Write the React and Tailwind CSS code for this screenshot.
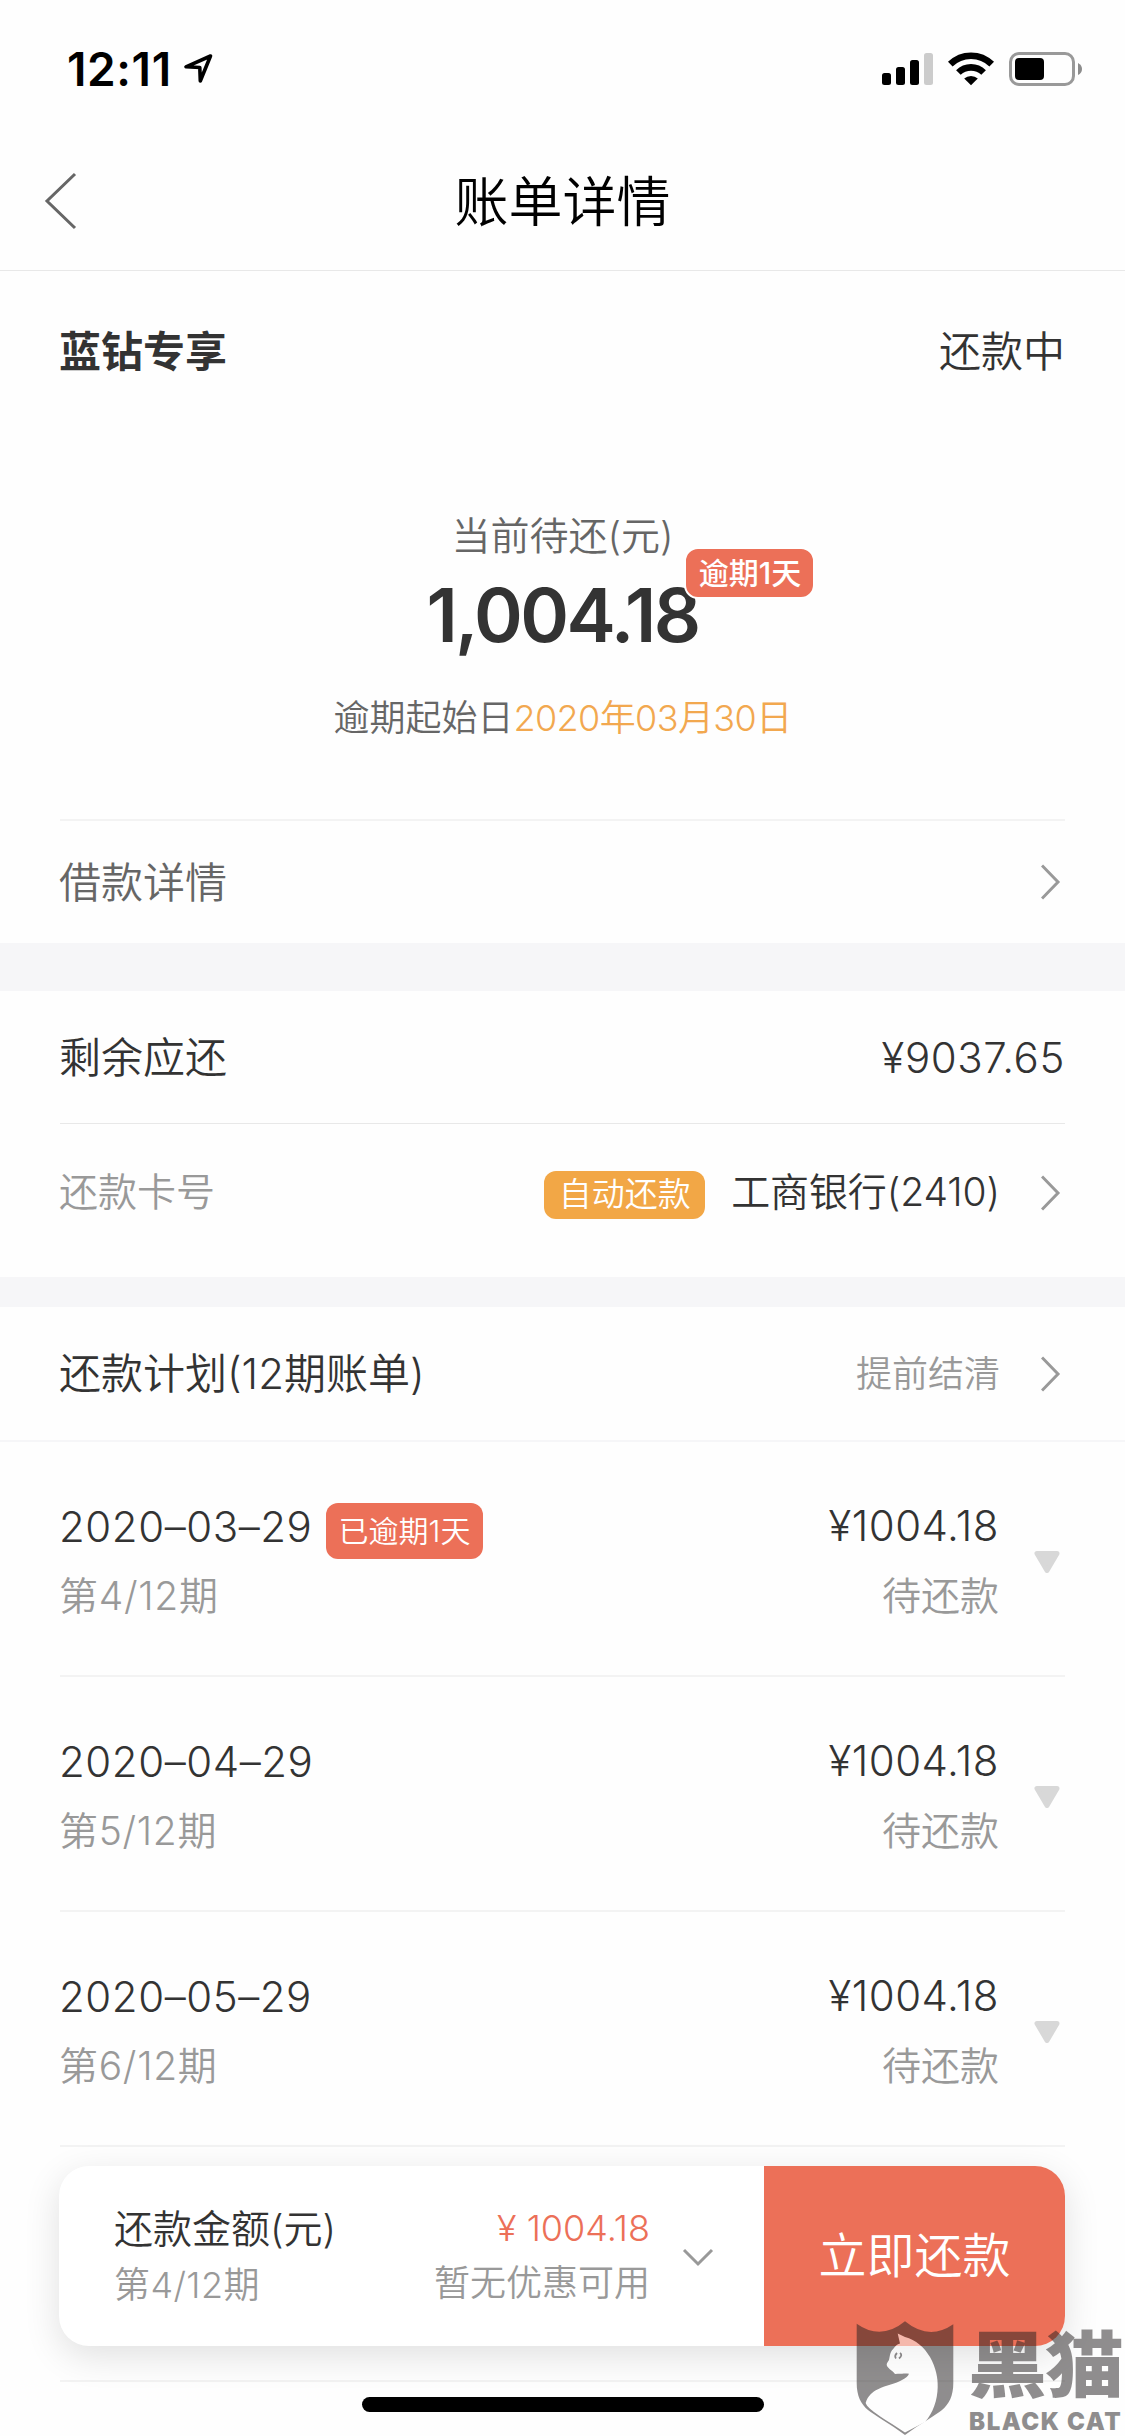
const periods = [
  { date: "2020–03–29", no: "第4/12期", amount: "¥1004.18", status: "待还款", overdue: "已逾期1天" },
  { date: "2020–04–29", no: "第5/12期", amount: "¥1004.18", status: "待还款" },
  { date: "2020–05–29", no: "第6/12期", amount: "¥1004.18", status: "待还款" },
];

function StatusBar() {
  return (
    <div className="flex h-[132px] items-start justify-between pr-[42px] pl-[67px] text-black">
      <div className="flex items-start pt-[45px]">
        <span className="w-[111px] text-[46px] leading-[48px] font-semibold tracking-[0.6px]">12:11</span>
        <svg width="38" height="38" viewBox="0 0 38 38" className="mt-1 ml-[3px]" fill="none">
          <path d="M29.5 7 5 17.8 18.8 18.5 19.3 32Z" stroke="black" strokeWidth="3.6" strokeLinejoin="round" />
        </svg>
      </div>
      <svg width="202" height="36" viewBox="0 0 202 36" className="mt-[51px]">
        <rect x="1" y="22" width="9" height="12" rx="2.5" />
        <rect x="15" y="16" width="9" height="18" rx="2.5" />
        <rect x="29" y="9" width="9" height="25" rx="2.5" />
        <rect x="43" y="2" width="9" height="32" rx="2.5" fill="#cccccc" />
        <g fill="none" stroke="black" strokeWidth="6.6">
          <path d="M69.3 13.2A29.5 29.5 0 0 1 110.7 13.2" />
          <path d="M77.4 21.5A18 18 0 0 1 102.6 21.5" />
        </g>
        <path d="M83.2 27.6A10 10 0 0 1 96.8 27.6L90 34.2Z" />
        <rect x="129.5" y="2.5" width="63" height="31" rx="8.5" fill="none" stroke="#999999" strokeWidth="3" />
        <rect x="134" y="7" width="29" height="22" rx="4" />
        <path d="M197 12Q201 14 201 18T197 24Z" fill="#8c8c8c" />
      </svg>
    </div>
  );
}

function ArrowRight() {
  return (
    <svg width="24" height="40" viewBox="0 0 24 40" fill="none">
      <path d="M1 3.5 17 20 1 36.5" stroke="#999999" strokeWidth="3" />
    </svg>
  );
}

function PeriodRow({ item }) {
  return (
    <li className="flex h-[235px] justify-between border-b-2 border-[#f3f3f3]">
      <div className="-ml-px pt-[58px]">
        <div className="flex h-[54px] items-start">
          <span className="w-[267px] text-[42px] leading-[54px] tracking-[0.55px] text-[#333333]">{item.date}</span>
          {item.overdue && (
            <span className="mt-[3px] flex h-14 w-[157px] shrink-0 items-center justify-center rounded-xl bg-[#ec7058] text-[30px] text-white">
              {item.overdue}
            </span>
          )}
        </div>
        <p className="mt-[15px] text-[39px] leading-[54px] tracking-[0.7px] text-[#999999]">{item.no}</p>
      </div>
      <div className="flex pt-[57px]">
        <div className="text-right">
          <p className="text-[42px] leading-[54px] tracking-[0.5px] text-[#333333]">{item.amount}</p>
          <p className="mt-4 text-[39px] leading-[54px] text-[#999999]">{item.status}</p>
        </div>
        <svg width="28" height="24" viewBox="0 0 28 24" className="mt-[51px] mr-1 ml-[34px]">
          <path d="M4 3.5H24L14 20.5Z" fill="#d8d8d8" stroke="#d8d8d8" strokeWidth="5" strokeLinejoin="round" />
        </svg>
      </div>
    </li>
  );
}

function PayBar() {
  return (
    <div className="absolute top-[2166px] left-[59px] flex h-[180px] w-[1006px] rounded-[30px] bg-white shadow-[0_10px_36px_rgba(0,0,0,0.12)]">
      <div className="flex flex-1 justify-between pr-[50px] pl-[55px]">
        <div className="pt-[38px]">
          <p className="text-[39px] leading-[50px] text-[#333333]">还款金额(元)</p>
          <p className="mt-[6px] text-[36px] leading-[50px] tracking-[0.4px] text-[#999999]">第4/12期</p>
        </div>
        <div className="flex items-start">
          <div className="pt-[37px] text-right">
            <p className="text-[36px] leading-[50px] text-[#ec7058]">¥ 1004.18</p>
            <p className="mt-[5px] text-[36px] leading-[50px] text-[#999999]">暂无优惠可用</p>
          </div>
          <svg width="32" height="22" viewBox="0 0 32 22" className="mt-[81px] ml-[32px]" fill="none">
            <path d="M2 3 16 17 30 3" stroke="#999999" strokeWidth="3" />
          </svg>
        </div>
      </div>
      <button className="w-[301px] rounded-r-[30px] bg-[#ec7058] text-[48px] text-white">立即还款</button>
    </div>
  );
}

function Watermark() {
  return (
    <div className="absolute top-[2320px] left-[856px] flex h-[116px] w-[269px] text-[#231f20] opacity-50">
      <svg width="98" height="116" viewBox="0 0 98 116" className="shrink-0">
        <path
          fill="currentColor"
          d="M0.7 3.7Q25 21 49 1.3Q73 21 97.3 4.3V63C97.3 76 93 84 86 90C80 95 65 103 49 115C33 103 18 95 12 90C5 84 0.7 76 0.7 63Z"
        />
        {/* cat */}
        <path
          fill="white"
          d="M41.7 13.5 49 17C60 20 68 27 74 37C80 48 82 58 81.7 67C81.5 80 77 93 69 102L49 112.5C38 105 26 98 18 92C13 88 10 85 9.7 82.7C12 76 16 72 22 69.3C30 65 40 64 46 60C50 58 52 56 53 53.7C48 53 45 54 42 53.7L39 54C36 50 31 48 30.7 45C30.5 43 32 42 33 40C34 36 34 32 37 29.3C39 26 41 24.5 44 23.5Z"
        />
        <path d="M41 33Q38 36 40 38.5M44 33Q47 35 43 38.5" fill="none" stroke="currentColor" strokeWidth="1.8" />
      </svg>
      <div className="ml-[14px] w-[155px]">
        <p className="mt-[7px] h-[84px] origin-top scale-y-90 text-[79px] leading-[84px] font-black tracking-[-2px] whitespace-nowrap">
          黑猫
        </p>
        <p className="mt-[-3px] ml-px text-[24px] leading-[28px] font-black tracking-[1.6px] whitespace-nowrap">
          BLACK CAT
        </p>
      </div>
    </div>
  );
}

export default function App() {
  return (
    <div className="relative h-[2436px] w-[1125px] overflow-hidden bg-[#fefefe] font-['Inter','Noto_Sans_CJK_SC',sans-serif] font-[350]">
      <StatusBar />

      <header className="grid h-[139px] grid-cols-[200px_1fr_200px] items-center border-b border-[#e8e8e8]">
        <svg width="36" height="60" viewBox="0 0 36 60" className="ml-[42px]" fill="none">
          <path d="M33 3 5 30 33 57" stroke="#666666" strokeWidth="3" />
        </svg>
        <h1 className="pt-[3px] text-center text-[54px] leading-[60px] text-black">账单详情</h1>
      </header>

      <section className="px-[60px]">
        <div className="flex h-[160px] items-center justify-between text-[42px] text-[#333333]">
          <span className="-ml-px font-bold">蓝钻专享</span>
          <span>还款中</span>
        </div>
        <div className="flex h-[388px] flex-col items-center pt-[77px]">
          <p className="text-[39px] leading-[56px] text-[#666666]">当前待还(元)</p>
          <div className="relative mt-[11px]">
            <p className="text-[74px] leading-[80px] font-semibold tracking-[-2.6px] text-[#333333]">1,004.18</p>
            <span className="absolute top-[-28px] left-[258px] flex h-[52px] w-[131px] items-center justify-center rounded-[14px] border-2 border-white bg-[#ec7058] text-[30px] font-medium text-white">
              逾期1天
            </span>
          </div>
          <p className="mt-[38px] text-[36px] leading-[50px] text-[#666666]">
            逾期起始日<span className="tracking-[-0.6px] text-[#f2a84f]">2020年03月30日</span>
          </p>
        </div>
        <div className="flex h-[124px] items-center justify-between border-t-2 border-[#f3f3f3] text-[42px] text-[#666666]">
          <span className="-ml-px">借款详情</span>
          <ArrowRight />
        </div>
      </section>

      <div className="h-12 bg-[#f6f6f8]" />

      <section className="h-[286px] px-[60px] text-[#333333]">
        <div className="flex h-[133px] items-center justify-between border-b border-[#e8e8e8] text-[42px]">
          <span className="-ml-px">剩余应还</span>
          <span className="tracking-[0.6px]">¥9037.65</span>
        </div>
        <div className="flex h-[137px] items-center text-[39px]">
          <span className="-ml-px flex-1 text-[#999999]">还款卡号</span>
          <span className="mt-[5px] mr-[26px] flex h-12 w-[161px] items-center justify-center rounded-xl bg-[#f2a746] text-[33px] text-white">
            自动还款
          </span>
          <span className="mr-[41px] tracking-[-0.1px]">工商银行(2410)</span>
          <ArrowRight />
        </div>
      </section>

      <div className="h-[30px] bg-[#f6f6f8]" />

      <section>
        <div className="flex h-[135px] items-center border-b-2 border-[#f6f6f8] px-[60px]">
          <h2 className="-ml-px flex-1 text-[42px] text-[#333333]">还款计划(12期账单)</h2>
          <span className="mr-[41px] text-[36px] text-[#999999]">提前结清</span>
          <ArrowRight />
        </div>
        <ul className="mx-[60px]">
          {periods.map((item) => (
            <PeriodRow key={item.date} item={item} />
          ))}
          <li className="h-[235px] border-b-2 border-[#f3f3f3]" />
        </ul>
      </section>

      <PayBar />
      <div className="absolute top-[2397px] left-[362px] h-[15px] w-[402px] rounded-full bg-black" />
      <Watermark />
    </div>
  );
}
